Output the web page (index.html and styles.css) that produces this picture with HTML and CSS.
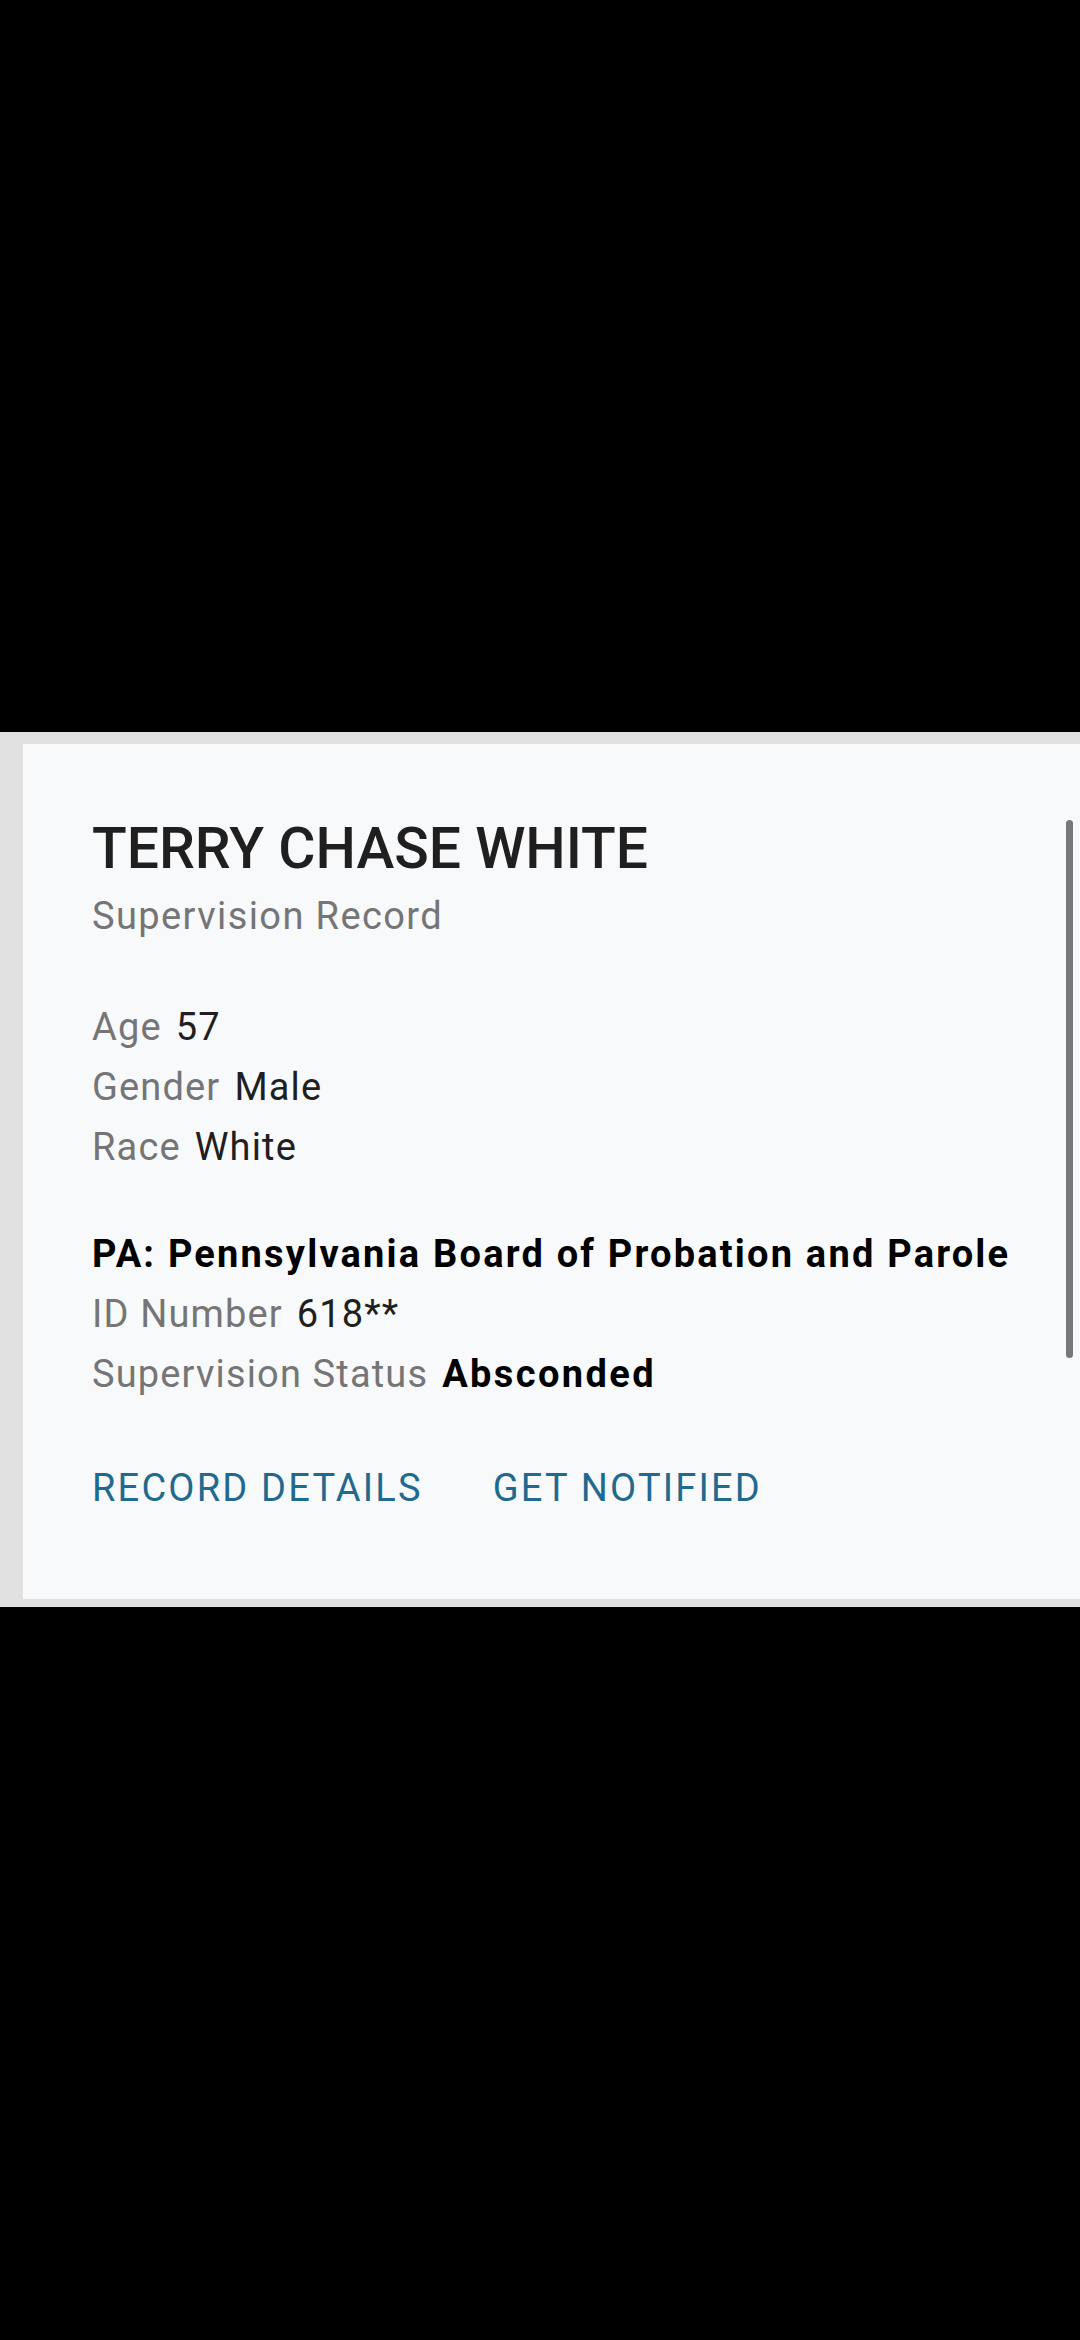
FILE: index.html
```html
<!DOCTYPE html>
<html>
<head>
<meta charset="utf-8">
<link rel="stylesheet" href="styles.css">
</head>
<body>
<div class="top-black"></div>
<div class="sheet">
  <div class="card">
    <div class="scrollbar"></div>
    <h1 class="name">TERRY CHASE WHITE</h1>
    <div class="subtitle">Supervision Record</div>
    <div class="group demo">
      <div class="row"><span class="label">Age</span><span class="value">57</span></div>
      <div class="row"><span class="label">Gender</span><span class="value">Male</span></div>
      <div class="row"><span class="label">Race</span><span class="value">White</span></div>
    </div>
    <div class="group agency">
      <div class="row"><span class="agency-name">PA: Pennsylvania Board of Probation and Parole</span></div>
      <div class="row"><span class="label">ID Number</span><span class="value">618**</span></div>
      <div class="row"><span class="label">Supervision Status</span><span class="value strong">Absconded</span></div>
    </div>
    <div class="actions">
      <span class="action">RECORD DETAILS</span>
      <span class="action">GET NOTIFIED</span>
    </div>
  </div>
</div>
</body>
</html>
```
FILE: styles.css
```css
html, body {
  margin: 0;
  padding: 0;
  background: #000;
  width: 1080px;
  height: 2340px;
  overflow: hidden;
  font-family: Roboto, "Noto Sans", sans-serif;
}
.top-black {
  height: 732px;
}
.sheet {
  background: #e1e1e1;
  padding: 12px 0 8px 23px;
}
.card {
  position: relative;
  background: #f8f9fb;
  height: 855px;
  box-sizing: border-box;
  padding: 71px 0 0 69px;
}
.scrollbar {
  position: absolute;
  right: 7px;
  top: 76px;
  width: 7px;
  height: 538px;
  border-radius: 4px;
  background: #787878;
}
.name {
  margin: 0;
  font-size: 57px;
  line-height: 68px;
  font-weight: 500;
  color: #1f1f1f;
}
.subtitle {
  margin-top: 3px;
  font-size: 38px;
  line-height: 60px;
  letter-spacing: 1.4px;
  color: #757575;
}
.group {
  display: flex;
  flex-direction: column;
}
.demo {
  margin-top: 51px;
}
.agency {
  margin-top: 47px;
}
.row {
  display: flex;
  gap: 14px;
  font-size: 38px;
  line-height: 60px;
  letter-spacing: 1.15px;
}
.label {
  color: #757575;
}
.value {
  color: #1f1f1f;
}
.value.strong {
  font-weight: 700;
  letter-spacing: 2.4px;
  color: #000;
}
.agency-name {
  font-weight: 700;
  letter-spacing: 2.2px;
  color: #000;
}
.actions {
  margin-top: 54px;
  display: flex;
  gap: 70px;
  font-size: 38px;
  line-height: 60px;
  font-weight: 400;
  letter-spacing: 2.2px;
  color: #1f6a8e;
}
```
